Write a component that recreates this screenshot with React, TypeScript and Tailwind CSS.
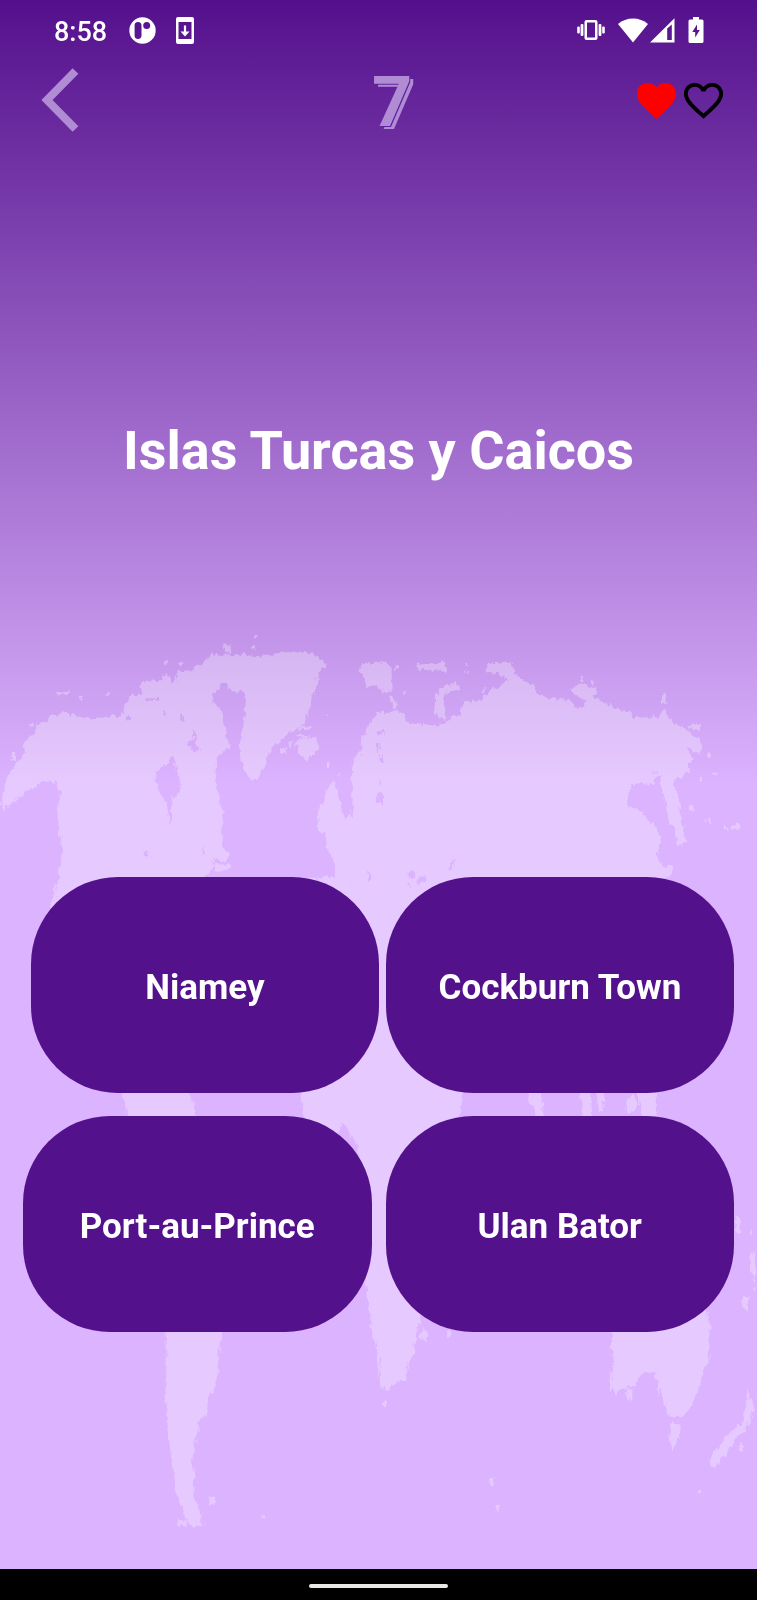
import { MdFavorite, MdFavoriteBorder } from "react-icons/md";

function WorldMap() {
  return (
    <svg
      className="absolute inset-0 h-full w-full"
      viewBox="0 0 757 1569"
      preserveAspectRatio="none"
      aria-hidden="true"
    >
      <defs>
        <filter id="coast" x="0" y="0" width="757" height="1569" filterUnits="userSpaceOnUse">
          <feTurbulence type="fractalNoise" baseFrequency="0.25 0.12" numOctaves="3" seed="4" result="n" />
          <feDisplacementMap in="SourceGraphic" in2="n" scale="8" xChannelSelector="R" yChannelSelector="G" />
        </filter>
      </defs>
      <g fill="#fff" opacity="0.3" filter="url(#coast)">
        {/* North America and Greenland */}
        <path
          fillRule="evenodd"
          transform="translate(0 620) scale(0.33333)"
          d="M5 560L5 545L20 480L32 450L50 430L75 400L72 375L85 355L105 345L108 315L140 305L150 285L175 285L190 270L215 285L240 290L265 295L280 300L300 295L320 295L340 285L355 292L368 285L372 265L385 245L390 228L415 222L430 225L422 205L428 185L460 178L485 185L495 160L510 170L515 190L530 180L530 145L545 155L560 150L580 160L582 140L615 125L630 105L680 103L740 103L760 112L830 105L870 95L935 97L950 115L975 125L980 135L965 150L955 155L950 205L935 230L930 270L915 310L880 330L850 350L840 365L825 375L805 400L795 440L785 465L765 478L750 478L735 455L722 410L722 370L730 320L735 270L738 230L725 210L705 215L690 210L680 190L665 188L655 210L640 225L638 240L655 255L665 280L670 310L680 340L688 380L670 400L655 410L650 440L648 500L660 540L668 600L662 650L675 690L688 710L672 725L640 715L635 750L610 775L500 1000L200 1000L120 980L160 840L180 740L187 700L177 640L172 580L182 520L170 485L130 485L100 500L75 520L40 545L15 572Z
          M513 405L525 430L530 465L545 500L535 525L515 535L512 575L520 600L508 610L504 580L500 545L480 520L468 490L470 455L490 440L505 425Z
          M580 330L592 345L585 370L600 385L590 400L570 385L565 370L578 358Z
          M543 265L548 280L555 300L545 306L540 290Z
          M490 268L500 280L498 296L490 285Z
          M440 236L475 234L478 240L440 243Z
          M374 288L392 288L390 302L378 300Z
          M600 690L610 680L612 700L602 703Z
          M437 694L448 694L448 706L438 705Z"
        />
        {/* Arctic islands, Iceland, Svalbard */}
        <path
          transform="translate(0 620) scale(0.33333)"
          d="M890 365L910 355L945 355L958 375L950 395L925 420L905 408L890 392Z M895 320L940 318L935 330L895 330Z M890 345L930 345L930 352L890 352Z M840 385L850 380L860 400L845 402Z M865 365L878 362L876 385L868 385Z M672 75L690 72L692 90L685 102L674 95Z M755 78L768 78L768 90L755 90Z M762 42L773 42L773 52L762 52Z M168 216L208 216L208 223L168 223Z M314 217L328 217L328 224L314 224Z M240 228L248 228L248 236L240 236Z M88 312L100 312L100 320L88 320Z M36 402L48 402L48 420L36 420Z M980 278L990 278L990 288L980 288Z M489 124L499 124L499 131L489 131Z M980 425L988 425L988 445L980 445Z M1014 455L1022 455L1022 470L1014 470Z M532 128L550 128L550 136L532 136Z M640 735L690 730L690 750L650 752Z"
        />
        {/* Eurasia */}
        <path
          fillRule="evenodd"
          transform="translate(300 620) scale(0.33333)"
          d="M50 625L55 570L75 540L78 495L105 485L118 540L130 590L155 590L158 540L155 420L180 400L182 370L195 345L205 310L225 290L240 275L275 275L300 270L318 285L320 305L345 312L375 312L400 318L440 310L450 290L485 285L488 240L520 245L550 235L575 205L610 195L625 180L600 165L565 155L560 130L635 128L640 160L680 185L705 195L712 228L760 235L815 240L820 262L850 262L858 245L830 225L812 210L840 190L880 200L890 215L875 230L915 245L945 268L990 275L1000 292L1070 292L1085 285L1092 265L1108 298L1140 320L1165 335L1200 360L1205 400L1185 395L1160 380L1178 415L1165 450L1140 478L1120 475L1132 520L1142 570L1150 620L1155 670L1135 678L1120 630L1095 560L1085 500L1080 470L1060 450L1065 490L995 492L980 530L990 560L1020 570L1045 600L1070 625L1085 660L1070 700L1085 740L1120 735L1112 770L1050 790L1040 1200L700 1300L400 1000L262 980L255 880L240 865L232 890L220 960L20 960L0 775L105 770L100 720L78 680L80 640L55 632Z
          M238 332L250 332L246 346L236 345Z
          M232 365L240 372L236 395L230 390Z
          M244 395L250 405L244 430L238 420Z
          M238 480L246 485L240 500Z
          M240 515L250 532L245 555L230 552Z
          M1058 455L1070 450L1078 470L1066 480Z
          M320 760L345 755L342 775L330 772Z
          M355 772L378 772L375 785L350 795Z
          M318 790L332 788L330 802Z
          M462 715L468 722L450 750L440 752Z
          M150 790L165 800L160 830L150 815Z
          M190 810L200 830L210 865L198 850Z
          M205 755L212 765L208 790L203 775Z"
        />
        <path
          transform="translate(300 620) scale(0.33333)"
          d="M175 150L190 128L265 128L275 145L275 215L245 215L235 195L200 200L190 175Z M345 135L370 130L435 128L438 152L400 155L360 150Z M412 215L440 195L470 182L478 210L445 212L430 235L435 265L438 298L415 295L402 270Z M284 140L294 140L294 150L284 150Z M270 230L280 235L290 265L282 270L272 250Z M308 215L316 215L316 222L308 222Z M497 130L504 130L504 138L497 138Z M497 150L504 150L504 158L497 158Z M545 205L552 200L552 222L545 222Z M1086 218L1096 222L1096 255L1086 255Z M1165 315L1205 312L1205 330L1170 325Z M1218 402L1234 406L1232 414L1218 412Z M1242 458L1250 458L1250 466L1242 466Z M1197 474L1205 474L1205 484L1197 484Z M1165 550L1182 565L1176 572L1165 562Z M1222 594L1234 602L1232 612L1224 606Z M1270 618L1280 620L1280 630L1272 630Z M1290 622L1305 615L1325 612L1322 624L1300 630Z M840 172L850 172L850 186L840 186Z M872 180L884 182L884 192L872 190Z"
        />
        {/* Africa */}
        <path d="M310 890L400 880L460 960L480 1060L464 1092L459 1116L445 1200L424 1300L417 1335L414 1355L408 1362L405 1380L396 1384L386 1391L380 1386L379 1358L374 1338L369 1310L366 1280L362 1200L358 1145L350 1135L343 1122L336 1135L305 1118L299 1092L290 1000Z M422 1326L428 1332L426 1342L420 1338Z M446 1326L452 1334L448 1338Z M382 1402L386 1402L386 1406L382 1406Z" />
        {/* South America */}
        <path
          transform="translate(100 1320) scale(0.33333)"
          d="M65 -690L265 -690L290 -610L420 -400L400 -150L366 30L356 120L350 170L340 215L326 235L319 285L296 298L292 340L282 380L275 425L286 470L276 525L290 555L305 590L308 618L275 618L262 600L245 560L224 510L222 460L212 400L204 330L196 230L199 130L196 30L150 -200L70 -450L85 -600Z M325 530L345 528L345 550L330 556Z M480 575L497 592L495 600L484 592Z M233 600L262 598L258 618L235 618Z M384 56L390 56L390 62L384 62Z"
        />
        {/* South-east Asia */}
        <path d="M526 1088L540 1088L545 1118L536 1118Z M580 1088L591 1088L592 1118L581 1118Z M595 1088L605 1088L603 1112L598 1112Z M625 1100L635 1094L637 1110L629 1114Z M637 1090L656 1090L656 1118L643 1118Z" />
        {/* Australia and New Zealand */}
        <path
          transform="translate(590 1180) scale(0.33333)"
          d="M65 455L68 540L60 620L75 645L95 625L130 620L160 580L195 575L205 620L225 680L240 710L275 712L300 690L330 610L355 540L362 440L350 390L300 330L65 400Z M238 725L272 735L270 770L250 808L235 775Z M472 622L482 640L492 690L475 730L460 760L440 770L400 830L375 865L360 860L362 825L420 760L440 735L455 735L465 690Z M436 108L448 112L454 160L438 160Z M478 230L490 215L496 260L495 340L488 280L478 262Z M455 348L465 355L478 348L475 390L460 385Z M108 630L130 628L130 660L112 662Z M448 790L456 790L456 815L448 812Z M324 930L330 930L330 942L324 940Z M480 150L485 150L485 162L480 162Z"
        />
        <path d="M489 1479L494 1479L494 1484L490 1488Z M496 1505L499 1505L499 1510L496 1510Z" />
      </g>
    </svg>
  );
}

function StatusBar() {
  return (
    <div className="flex h-[60px] items-center justify-between pr-[53px] pl-[54px] text-white">
      <div className="flex items-center">
        <span className="pt-[3px] text-[27px] leading-8 font-medium">8:58</span>
        <svg className="ml-[22px] size-[27px]" viewBox="0 0 27 27" aria-hidden="true">
          <path
            fill="currentColor"
            fillRule="evenodd"
            d="M13.5 .3a13.2 13.2 0 1 1 0 26.4a13.2 13.2 0 1 1 0-26.4zM9 5C6.500 5 5.600 6.300 5.600 8.500V18.500C5.600 20.800 6.700 22 9 22S12.500 20.800 12.500 18.500V8.500C12.500 6.300 11.500 5 9 5zM17.700 5a3.500 3.500 0 1 0 0 7a3.500 3.500 0 1 0 0-7z"
          />
        </svg>
        <svg className="ml-[20px] h-[27px] w-[18px]" viewBox="0 0 18 27" aria-hidden="true">
          <path
            fill="currentColor"
            fillRule="evenodd"
            d="M2 0H16Q18 0 18 2V25Q18 27 16 27H2Q0 27 0 25V2Q0 0 2 0zM2.500 5V22H15.500V5zM7.900 8.500H10.100V14.500H13.500L9 19.500L4.500 14.500H7.900z"
          />
        </svg>
      </div>
      <div className="flex items-center">
        <svg className="h-[22px] w-[28px]" viewBox="0 0 28 22" fill="currentColor" aria-hidden="true">
          <path
            fillRule="evenodd"
            d="M9.500 1H18.500Q20.500 1 20.500 3V19Q20.500 21 18.500 21H9.500Q7.500 21 7.500 19V3Q7.500 1 9.500 1zM10 3.500V18.500H18V3.500z"
          />
          <rect x="3.600" y="5" width="2.800" height="12" rx="1" />
          <rect x="21.600" y="5" width="2.800" height="12" rx="1" />
          <rect x=".2" y="7.500" width="2.600" height="7" rx="1" />
          <rect x="25.200" y="7.500" width="2.600" height="7" rx="1" />
        </svg>
        <svg className="ml-[13px] h-[25px] w-[30px]" viewBox="0 0 30 25" fill="currentColor" aria-hidden="true">
          <path d="M0 6Q6.500 .5 15 .5T30 6L15 24.500z" />
        </svg>
        <svg className="ml-[2px] size-[25px]" viewBox="0 0 25 25" aria-hidden="true">
          <path fill="currentColor" fillRule="evenodd" d="M0 24.500L24.500 .3V24.500zM17.200 10.500V22H21.800V6.500z" />
        </svg>
        <svg className="ml-[13px] h-[26px] w-[16px]" viewBox="0 0 16 26" aria-hidden="true">
          <path
            fill="currentColor"
            fillRule="evenodd"
            d="M5 0H11V2.500H14Q15.500 2.500 15.500 4V24.500Q15.500 26 14 26H2Q.5 26 .5 24.500V4Q.5 2.500 2 2.500H5zM9 7.500L4.300 15H7.200V20.500L11.800 13H9z"
          />
        </svg>
      </div>
    </div>
  );
}

function AnswerButton({ label }: { label: string }) {
  return (
    <button
      type="button"
      className="h-[216px] flex-1 rounded-[87px] bg-[#54118c] pt-[5px] text-[35px] leading-10 font-bold text-white"
    >
      {label}
    </button>
  );
}

export default function App() {
  return (
    <div className="flex min-h-screen flex-col font-['Roboto',sans-serif]">
      <div className="relative flex flex-1 flex-col bg-[linear-gradient(#54108c_0%,#dcb3ff_50%)]">
        <WorldMap />
        <div className="relative flex flex-1 flex-col">
          <StatusBar />
          <header className="grid h-20 grid-cols-3 items-center pr-[30px] pl-[41px]">
            <button type="button" aria-label="Volver" className="justify-self-start">
              <svg className="h-[64px] w-[39px]" viewBox="0 0 39 64" fill="none" aria-hidden="true">
                <path d="M34.500 3L6 32L34.500 61" stroke="#b08cd4" strokeWidth="8" />
              </svg>
            </button>
            <div className="justify-self-center pt-1 pl-4 text-[70px] leading-none font-bold text-[#b08cd4] [text-shadow:1px_1px_0_#6221a0,4px_3px_0_#b08cd4]">
              7
            </div>
            <div className="flex justify-self-end">
              <MdFavorite className="size-[47px] text-[#ff0000]" />
              <MdFavoriteBorder className="size-[47px] text-black" />
            </div>
          </header>
          <main className="flex flex-1 flex-col">
            <h1 className="mt-[279px] text-center text-[54px] leading-[64px] font-bold text-white">
              Islas Turcas y Caicos
            </h1>
            <div className="mt-[394px] flex flex-col gap-[23px]">
              <div className="flex gap-[7px] pr-[23px] pl-[31px]">
                <AnswerButton label="Niamey" />
                <AnswerButton label="Cockburn Town" />
              </div>
              <div className="flex gap-[14px] px-[23px]">
                <AnswerButton label="Port-au-Prince" />
                <AnswerButton label="Ulan Bator" />
              </div>
            </div>
          </main>
        </div>
      </div>
      <footer className="flex h-[31px] items-center justify-center bg-black pt-[2px]">
        <div className="h-1 w-[139px] rounded-full bg-[#e8e8e8]" />
      </footer>
    </div>
  );
}
